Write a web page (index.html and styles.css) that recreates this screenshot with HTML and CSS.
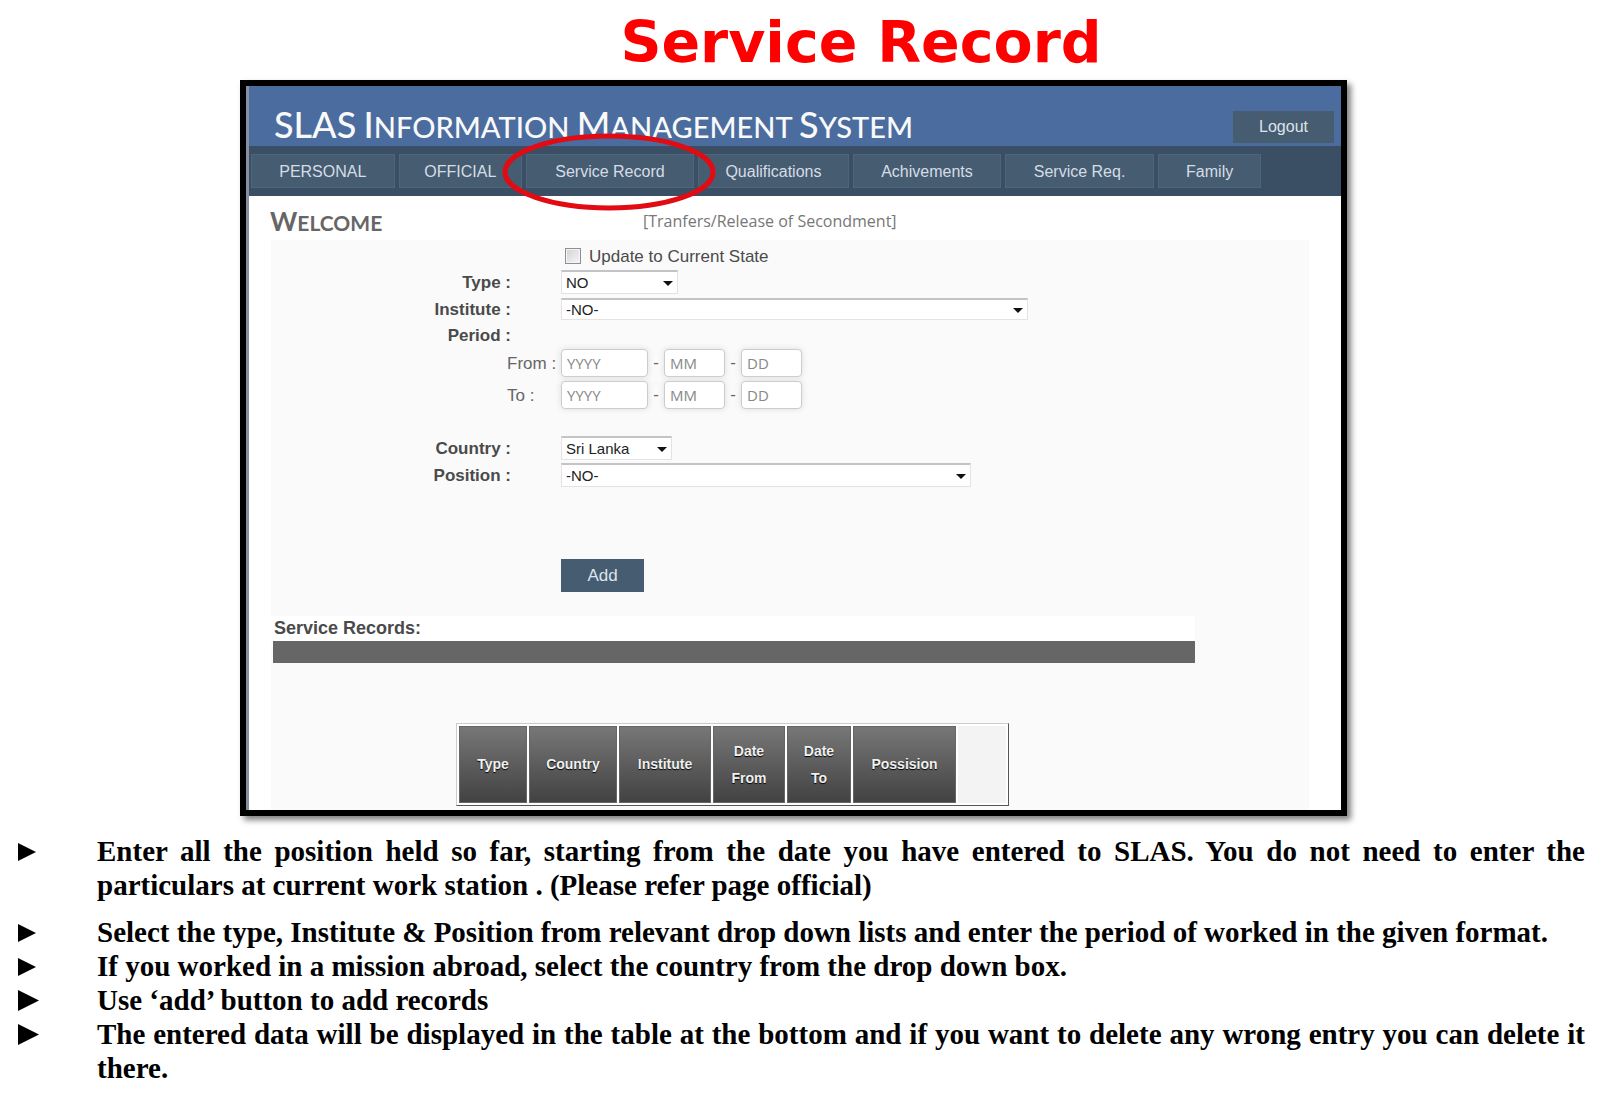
FILE: index.html
```html
<!DOCTYPE html>
<html lang="en">
<head>
<meta charset="utf-8">
<title>Service Record</title>
<link rel="stylesheet" href="styles.css">
</head>
<body>
<h1 class="slide-title">Service Record</h1>

<main class="app">
  <header class="app-header">
    <h2 class="app-name"><span class="cap">SLAS</span> <span class="cap">I</span>nformation <span class="cap">M</span>anagement <span class="cap">S</span>ystem</h2>
    <button type="button" class="logout">Logout</button>
  </header>
  <nav class="menu">
    <a href="#personal">PERSONAL</a>
    <a href="#official">OFFICIAL</a>
    <a href="#service-record" class="marked">Service Record
      <svg class="ring" viewBox="0 0 214 78" aria-hidden="true"><ellipse cx="107" cy="39" rx="104" ry="36" fill="none" stroke="#e30b13" stroke-width="5"/></svg>
    </a>
    <a href="#qualifications">Qualifications</a>
    <a href="#achivements">Achivements</a>
    <a href="#service-req">Service Req.</a>
    <a href="#family">Family</a>
  </nav>
  <div class="heading">
    <h3 class="welcome"><span class="cap">W</span>elcome</h3>
    <p class="subtitle">[Tranfers/Release of Secondment]</p>
  </div>

  <section class="panel">
    <form>
      <div class="row row-check">
        <input type="checkbox" id="current"><label class="check-label" for="current">Update to Current State</label>
      </div>
      <div class="row row-type">
        <label class="name" for="type">Type :</label>
        <span class="select select-type"><select id="type"><option>NO</option></select></span>
      </div>
      <div class="row row-institute">
        <label class="name" for="institute">Institute :</label>
        <span class="select select-institute"><select id="institute"><option>-NO-</option></select></span>
      </div>
      <div class="row row-period"><span class="name">Period :</span></div>
      <div class="row row-from">
        <label class="sub" for="from-year">From :</label>
        <input class="date year" id="from-year" placeholder="YYYY"><span class="dash">-</span><input class="date" aria-label="From month" placeholder="MM"><span class="dash">-</span><input class="date" aria-label="From day" placeholder="DD">
      </div>
      <div class="row row-to">
        <label class="sub" for="to-year">To :</label>
        <input class="date year" id="to-year" placeholder="YYYY"><span class="dash">-</span><input class="date" aria-label="To month" placeholder="MM"><span class="dash">-</span><input class="date" aria-label="To day" placeholder="DD">
      </div>
      <div class="row row-country">
        <label class="name" for="country">Country :</label>
        <span class="select select-country"><select id="country"><option>Sri Lanka</option></select></span>
      </div>
      <div class="row row-position">
        <label class="name" for="position">Position :</label>
        <span class="select select-position"><select id="position"><option>-NO-</option></select></span>
      </div>
      <div class="row row-add"><button type="button" class="add">Add</button></div>
    </form>

    <div class="records">
      <h4>Service Records:</h4>
      <div class="bar"></div>
    </div>
    <table class="grid">
      <colgroup><col class="c-type"><col class="c-country"><col class="c-institute"><col class="c-from"><col class="c-to"><col class="c-position"><col></colgroup>
      <thead>
        <tr><th>Type</th><th>Country</th><th>Institute</th><th>Date<br>From</th><th>Date<br>To</th><th>Possision</th><td></td></tr>
      </thead>
    </table>
  </section>
</main>

<ul class="notes">
  <li><svg class="mark" viewBox="0 0 18 18" aria-hidden="true"><path d="M0 0L18 9L0 18Z"/></svg><p>Enter all the position held so far, starting from the date you have entered to SLAS. You do not need to enter the particulars&nbsp;at&nbsp;current work station . (Please refer page official)</p></li>
  <li><svg class="mark" viewBox="0 0 18 18" aria-hidden="true"><path d="M0 0L18 9L0 18Z"/></svg><p>Select the type, Institute &amp; Position from relevant drop down lists and enter the period of worked in the given format.</p></li>
  <li><svg class="mark" viewBox="0 0 18 18" aria-hidden="true"><path d="M0 0L18 9L0 18Z"/></svg><p>If you worked in a mission abroad, select the country from the drop down box.</p></li>
  <li><svg class="mark large" viewBox="0 0 18 18" aria-hidden="true"><path d="M0 0L18 9L0 18Z"/></svg><p>Use ‘add’ button to add records</p></li>
  <li><svg class="mark large" viewBox="0 0 18 18" aria-hidden="true"><path d="M0 0L18 9L0 18Z"/></svg><p>The entered data will be displayed in the table at the bottom and if you want to delete any wrong entry you can delete it there.</p></li>
</ul>
</body>
</html>
```
FILE: styles.css
```css
* { box-sizing: border-box; }

body {
  margin: 0;
  background: #fff;
  color: #000;
  font-family: "Liberation Sans", Arial, sans-serif;
}

h1, h2, h3, h4, p { margin: 0; }

.slide-title {
  padding: 10px 0 6px 122px;
  color: #fe0000;
  font: 700 57px/64px "DejaVu Sans", sans-serif;
  text-align: center;
}

/* Application window */
.app {
  max-width: 1107px;
  margin: 0 auto 0 15%;
  border: 6px solid #000;
  background: #fff;
  box-shadow: 4px 4px 6px rgba(0, 0, 0, .5), inset 3px 0 0 #8790a3;
  padding-left: 3px;
  color: #4a4a4a;
  font-size: 17px;
}

.app-header {
  display: flex;
  justify-content: space-between;
  align-items: flex-end;
  height: 60px;
  padding: 0 7px 3px 25px;
  background: #4b6c9e;
}

.app-name {
  color: #f9f9f9;
  font: 500 29px/32px Lato, sans-serif;
  text-transform: uppercase;
}

.app-name .cap { font-size: 36px; }

.logout,
.add {
  border: 0;
  border-radius: 0;
  background: #465c71;
  color: #dde4ec;
  font: 16px "Liberation Sans", Arial, sans-serif;
}

.logout { width: 101px; height: 32px; }

.menu {
  display: grid;
  grid-template-columns: 144fr 124fr 168fr 152fr 148fr 150fr 103fr;
  gap: 4px;
  height: 50px;
  padding: 8px 80px 8px 2px;
  background: #3a4f63;
}

.menu a {
  position: relative;
  display: flex;
  align-items: center;
  justify-content: center;
  padding-top: 2px;
  border: 1px solid #4e667d;
  background: #465c71;
  color: #d5dde6;
  font-size: 16px;
  text-decoration: none;
  white-space: nowrap;
}

/* Red ring over the current menu item */
.ring {
  position: absolute;
  top: -22px;
  left: -25px;
  z-index: 1;
  width: 214px;
  height: 78px;
}

.heading {
  display: grid;
  grid-template-columns: 373px 1fr;
  align-items: end;
  height: 44px;
  padding: 0 0 6px 21px;
  color: #666;
}

.welcome {
  font: 700 21px/22px Lato, sans-serif;
  text-transform: uppercase;
}

.welcome .cap { font-size: 26px; }

.subtitle {
  color: #777;
  font: 16px/26px "Open Sans", sans-serif;
}

.panel {
  margin: 0 32px 0 22px;
  padding: 4px 0;
  background: #fafafa;
}

/* Form */
.row {
  display: flex;
  align-items: center;
  padding-left: 290px;
}

.row-check { height: 24px; }
.row-check input {
  appearance: none;
  width: 16px;
  height: 16px;
  margin: 0 8px 0 4px;
  border: 1px solid #8e8f8f;
  background: linear-gradient(135deg, #cfd2d6, #f6f6f6);
  box-shadow: inset 0 0 0 1px #f4f4f4;
}

.row-type { height: 24px; margin-top: 2px; }
.row-institute { height: 22px; margin-top: 4px; }
.row-period { height: 22px; margin-top: 4px; }
.row-from { height: 28px; margin-top: 3px; }
.row-to { height: 28px; margin-top: 4px; }
.row-country { height: 24px; margin-top: 27px; }
.row-position { height: 24px; margin-top: 3px; }
.row-add { margin-top: 72px; }

.name,
.sub,
.check-label { padding-top: 2px; }

.name {
  width: 240px;
  margin-left: -290px;
  margin-right: 50px;
  font-weight: 700;
  text-align: right;
}

.sub {
  width: 54px;
  margin-left: -54px;
  color: #666;
}

.select { position: relative; height: 100%; }

.select::after {
  content: "";
  position: absolute;
  top: 50%;
  right: 5px;
  margin-top: -1px;
  border: 5px solid transparent;
  border-top-color: #111;
  border-bottom: 0;
  pointer-events: none;
}

.select select {
  appearance: none;
  display: block;
  width: 100%;
  height: 100%;
  padding: 0 4px;
  border: 1px solid #e3e3e3;
  border-top: 2px solid #c3c3c8;
  border-radius: 0;
  background: #fff;
  color: #222;
  font: 15px "Liberation Sans", Arial, sans-serif;
}

.select-type { width: 117px; }
.select-institute { width: 467px; }
.select-country { width: 111px; }
.select-position { width: 410px; }

.date {
  width: 61px;
  height: 28px;
  padding: 0 5px;
  border: 1px solid #ccc;
  border-radius: 4px;
  background: #fff;
  box-shadow: 0 0 6px #ddd;
  font: 15px "Open Sans", sans-serif;
}

.date.year { width: 87px; }
.date::placeholder { color: #888; opacity: 1; }

.dash {
  width: 16px;
  color: #666;
  text-align: center;
}

.add { width: 83px; height: 33px; font-size: 17px; }

/* Records */
.records {
  width: 89%;
  margin-top: 24px;
}

.records h4 {
  padding: 0 3px;
  background: #fff;
  font-size: 18px;
  line-height: 25px;
}

.bar {
  height: 22px;
  margin-left: 2px;
  background: #666;
}

.grid {
  width: 553px;
  height: 83px;
  margin: 60px 0 0 185px;
  border: 1px solid;
  border-color: #ccc #555 #555 #ccc;
  border-spacing: 2px;
  background: #fff;
  table-layout: fixed;
}

.c-type { width: 68px; }
.c-country { width: 88px; }
.c-institute { width: 92px; }
.c-from { width: 72px; }
.c-to { width: 64px; }
.c-position { width: 103px; }

.grid th {
  padding: 0;
  border: 1px solid #666;
  background: linear-gradient(#777, #424242);
  color: #f0f0f0;
  font-size: 14px;
  line-height: 27px;
  text-shadow: 0 1px 1px #000;
}

.grid td { background: #f3f3f3; }

/* Instructions */
.notes {
  margin: 0;
  padding: 18px 15px 0 18px;
  list-style: none;
  font: 700 29px/34px "Liberation Serif", "Times New Roman", serif;
}

.notes li {
  display: grid;
  grid-template-columns: 79px 1fr;
  text-align: justify;
}

.notes li:first-child { margin-bottom: 13px; }

.mark {
  width: 18px;
  height: 18px;
  margin-top: 9px;
}

.mark.large { width: 21px; height: 21px; margin-top: 7px; }
```
